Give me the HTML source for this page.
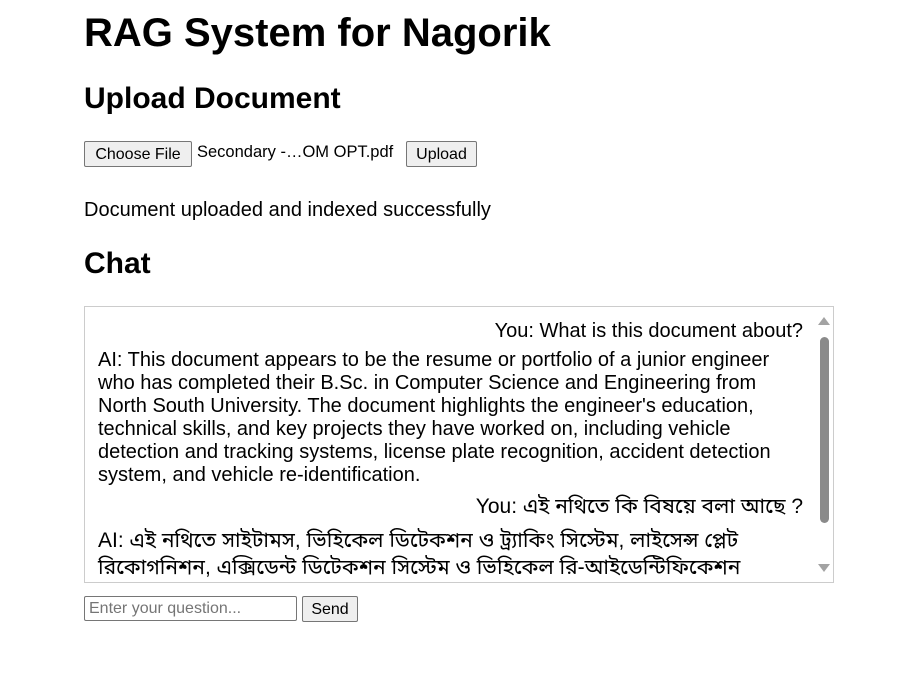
<!DOCTYPE html>
<html><head><meta charset="utf-8"><style>
body{margin:0;background:#fff;font-family:"Liberation Sans",Arial,sans-serif;color:#000;width:915px;height:678px;overflow:hidden;position:relative}
.a{position:absolute;white-space:nowrap}
h1,h2{margin:0;font-weight:bold}
button{font-family:"Liberation Sans",Arial,sans-serif;font-size:16px;background:#efefef;border:1px solid #767676;border-radius:2px;padding:0;height:26px;line-height:26px}
#box{position:absolute;left:84px;top:306px;width:748px;height:275px;border:1px solid #ccc;overflow:hidden}
.m{position:absolute;left:13px;width:690px;font-size:20px;line-height:23px}
.bn{font-family:"Liberation Sans","Noto Sans Bengali","Lohit Bengali",sans-serif;font-size:21px}
</style></head><body>
<h1 class="a" style="left:84px;top:10px;font-size:40px;line-height:46px">RAG System for Nagorik</h1>
<h2 class="a" style="left:84px;top:81px;font-size:30px;line-height:36px">Upload Document</h2>
<button class="a" style="left:84px;top:141px;width:108px">Choose File</button>
<div class="a" style="left:197px;top:143px;font-size:16.5px">Secondary -…OM OPT.pdf</div>
<button class="a" style="left:406px;top:141px;width:71px">Upload</button>
<div class="a" style="left:84px;top:199px;font-size:20px">Document uploaded and indexed successfully</div>
<h2 class="a" style="left:84px;top:246px;font-size:30px;line-height:36px">Chat</h2>
<div id="box">
<div class="m" style="top:13px;text-align:right;width:705px">You: What is this document about?</div>
<div class="m" style="top:42px">AI: This document appears to be the resume or portfolio of a junior engineer who has completed their B.Sc. in Computer Science and Engineering from North South University. The document highlights the engineer's education, technical skills, and key projects they have worked on, including vehicle detection and tracking systems, license plate recognition, accident detection system, and vehicle re-identification.</div>
<div class="m bn" style="top:188px;text-align:right;width:705px">You: এই নথিতে কি বিষয়ে বলা আছে ?</div>
<div class="m bn" style="top:220px;line-height:27px;width:690px">AI: এই নথিতে সাইটামস, ভিহিকেল ডিটেকশন ও ট্র্যাকিং সিস্টেম, লাইসেন্স প্লেট রিকোগনিশন, এক্সিডেন্ট ডিটেকশন সিস্টেম ও ভিহিকেল রি-আইডেন্টিফিকেশন</div>
<div style="position:absolute;right:4px;top:30px;width:9px;height:186px;background:#8a8a8a;border-radius:5px"></div>
<div style="position:absolute;right:3px;top:10px;width:0;height:0;border-left:6px solid transparent;border-right:6px solid transparent;border-bottom:8px solid #a3a3a3"></div>
<div style="position:absolute;right:3px;bottom:10px;width:0;height:0;border-left:6px solid transparent;border-right:6px solid transparent;border-top:8px solid #a3a3a3"></div>
</div>
<div class="a" style="left:84px;top:596px;height:23px;border:1px solid #767676;border-radius:2px;font-size:16px;color:#757575;line-height:23px;padding-left:4px;width:207px">Enter your question...</div>
<button class="a" style="left:302px;top:596px;width:56px">Send</button>
</body></html>
